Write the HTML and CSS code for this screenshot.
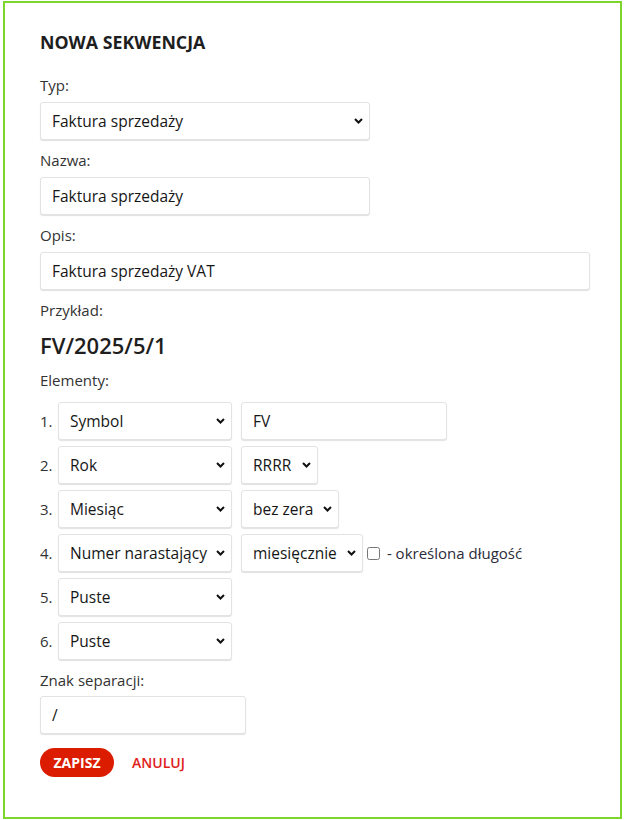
FILE: index.html
```html
<!DOCTYPE html>
<html lang="pl">
<head>
<meta charset="utf-8">
<title>Nowa sekwencja</title>
<link rel="stylesheet" href="styles.css">
</head>
<body>
<div class="card">
  <h2 class="title">NOWA SEKWENCJA</h2>

  <div class="field">
    <label class="label">Typ:</label>
    <select class="control w-330">
      <option>Faktura sprzedaży</option>
    </select>
  </div>

  <div class="field">
    <label class="label">Nazwa:</label>
    <input class="control w-330" type="text" value="Faktura sprzedaży">
  </div>

  <div class="field">
    <label class="label">Opis:</label>
    <input class="control w-550" type="text" value="Faktura sprzedaży VAT">
  </div>

  <div class="label">Przykład:</div>
  <div class="example">FV/2025/5/1</div>

  <div class="label elements-label">Elementy:</div>
  <div class="elements">
    <div class="el-row">
      <span class="num">1.</span>
      <select class="control el-type"><option>Symbol</option></select>
      <input class="control el-value" type="text" value="FV">
    </div>
    <div class="el-row">
      <span class="num">2.</span>
      <select class="control el-type"><option>Rok</option></select>
      <select class="control w-77"><option>RRRR</option></select>
    </div>
    <div class="el-row">
      <span class="num">3.</span>
      <select class="control el-type"><option>Miesiąc</option></select>
      <select class="control w-98"><option>bez zera</option></select>
    </div>
    <div class="el-row">
      <span class="num">4.</span>
      <select class="control el-type"><option>Numer narastający</option></select>
      <select class="control w-122"><option>miesięcznie</option></select>
      <label class="check"><input type="checkbox"> - określona długość</label>
    </div>
    <div class="el-row">
      <span class="num">5.</span>
      <select class="control el-type"><option>Puste</option></select>
    </div>
    <div class="el-row">
      <span class="num">6.</span>
      <select class="control el-type"><option>Puste</option></select>
    </div>
  </div>

  <div class="field sep-field">
    <label class="label">Znak separacji:</label>
    <input class="control w-206" type="text" value="/">
  </div>

  <div class="actions">
    <button class="btn-save" type="button">ZAPISZ</button>
    <button class="btn-cancel" type="button">ANULUJ</button>
  </div>
</div>
</body>
</html>
```

FILE: styles.css
```css
* {
  box-sizing: border-box;
}

html, body {
  margin: 0;
  padding: 0;
  background: #ffffff;
}

body {
  padding: 1px 3px;
  font-family: "Open Sans", "Noto Sans", sans-serif;
  color: #262626;
}

.card {
  width: 619px;
  height: 818px;
  border: 2px solid #7dd62c;
  padding: 27px 35px 0 35px;
}

.title {
  margin: 0 0 21px 0;
  font-size: 17.8px;
  line-height: 24px;
  font-weight: 700;
  color: #1e1e1e;
}

.field {
  display: flex;
  flex-direction: column;
  align-items: flex-start;
  margin-bottom: 10px;
}

.label {
  display: block;
  font-size: 15px;
  line-height: 20px;
  color: #333333;
}

.field .label {
  margin-bottom: 7px;
}

.control {
  height: 38px;
  border: 1px solid #e3e3e3;
  border-radius: 3px;
  box-shadow: 0 1px 1px rgba(0, 0, 0, 0.12);
  background-color: #ffffff;
  font-family: "Open Sans", "Noto Sans", sans-serif;
  font-size: 15.5px;
  color: #161616;
  padding: 0 11px;
  margin: 0;
  outline: none;
}

select.control {
  -webkit-appearance: none;
  appearance: none;
  padding-right: 22px;
  background-image: url("data:image/svg+xml,%3Csvg xmlns='http://www.w3.org/2000/svg' width='9' height='6' viewBox='0 0 9 6'%3E%3Cpath d='M1 1l3.5 3.5L8 1' fill='none' stroke='%23111' stroke-width='2'/%3E%3C/svg%3E");
  background-repeat: no-repeat;
  background-position: right 6px center;
  background-size: 9px 6px;
}

.w-330 { width: 330px; }
.w-550 { width: 550px; }
.w-206 { width: 206px; }
.w-77 { width: 77px; }
.w-98 { width: 98px; }
.w-122 { width: 122px; }

.example {
  margin-top: 10px;
  font-size: 22px;
  line-height: 30px;
  font-weight: 600;
  color: #1e1e1e;
}

.elements-label {
  margin-top: 10px;
}

.elements {
  margin-top: 12px;
  display: flex;
  flex-direction: column;
  gap: 6px;
}

.el-row {
  display: flex;
  align-items: center;
  height: 38px;
}

.num {
  width: 18px;
  font-size: 15px;
  color: #333333;
}

.el-type {
  width: 174px;
  margin-right: 9px;
}

.el-value {
  width: 206px;
}

.check {
  display: flex;
  align-items: center;
  font-size: 15px;
  color: #2b2b3a;
  white-space: pre;
}

.check input {
  margin: 0 3px 0 4px;
  width: 13px;
  height: 13px;
}

.sep-field {
  margin-top: 10px;
}

.sep-field .label {
  margin-bottom: 6px;
}

.actions {
  display: flex;
  align-items: center;
  margin-top: 14px;
  gap: 18px;
}

.btn-save {
  height: 29px;
  padding: 0 13.5px;
  border: none;
  border-radius: 15px;
  background: #dc1c00;
  color: #ffffff;
  font-family: "Open Sans", "Noto Sans", sans-serif;
  font-size: 14px;
  font-weight: 700;
}

.btn-cancel {
  padding: 0;
  border: none;
  background: none;
  color: #e0201b;
  font-family: "Open Sans", "Noto Sans", sans-serif;
  font-size: 14px;
  font-weight: 600;
}
```
